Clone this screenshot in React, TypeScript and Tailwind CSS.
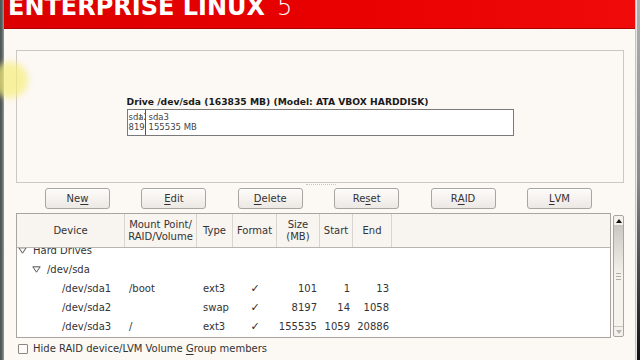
import React from 'react';

interface Row {
  level: number;
  expander?: boolean;
  device: string;
  mount?: string;
  type?: string;
  format?: boolean;
  size?: string;
  start?: string;
  end?: string;
}

const rows: Row[] = [
  { level: 0, expander: true, device: 'Hard Drives' },
  { level: 1, expander: true, device: '/dev/sda' },
  { level: 2, device: '/dev/sda1', mount: '/boot', type: 'ext3', format: true, size: '101', start: '1', end: '13' },
  { level: 2, device: '/dev/sda2', type: 'swap', format: true, size: '8197', start: '14', end: '1058' },
  { level: 2, device: '/dev/sda3', mount: '/', type: 'ext3', format: true, size: '155535', start: '1059', end: '20886' },
];

const buttons: [string, string, string][] = [
  ['Ne', 'w', ''],
  ['', 'E', 'dit'],
  ['', 'D', 'elete'],
  ['Re', 's', 'et'],
  ['R', 'A', 'ID'],
  ['', 'L', 'VM'],
];

const cols = 'grid grid-cols-[108px_72px_36px_44px_43px_33px_39px_1fr]';

const Expander = () => (
  <svg width="9" height="7" viewBox="0 0 9 7" className="shrink-0">
    <path d="M0.8 0.8 L8.2 0.8 L4.5 6.2 Z" fill="#fbf9f7" stroke="#555" strokeWidth="1" strokeLinejoin="round" />
  </svg>
);

export default function App() {
  return (
    <div className="relative w-[640px] h-[360px] overflow-hidden flex bg-[#fcf8f4] font-['DejaVu_Sans','Liberation_Sans',sans-serif] text-[#2e2e2e]">
      {/* left window edge */}
      <div className="w-[4px] h-full bg-gradient-to-r from-[#4a5252] via-[#5c6464] to-[#9aa0a0]"></div>

      <div className="w-[631px] flex flex-col">
        {/* Banner */}
        <div className="h-[29px] shrink-0 bg-gradient-to-r from-[#dc0000] via-[#e80000] to-[#f00a0a] border-b border-[#b00000] pl-[4px] overflow-hidden">
          <div className="mt-[-5px] leading-none text-white text-[24px] whitespace-nowrap">
            <span className="font-bold">ENTERPRISE LINUX</span>
            <span className="font-extralight ml-[12px]">5</span>
          </div>
        </div>

        {/* Drive panel */}
        <div className="ml-[12px] mt-[21px] w-[608px] h-[133px] shrink-0 border border-[#cbc7c3] flex items-center justify-center">
          <div className="w-[387px] mt-[-1px]">
            <div className="text-[9.2px] font-bold leading-[11px] text-[#1a1a1a] whitespace-nowrap">
              Drive /dev/sda (163835 MB) (Model: ATA VBOX HARDDISK)
            </div>
            <div className="mt-[2px] h-[27px] bg-white border border-[#7a7a7a] flex">
              <div className="w-[18px] h-full border-r border-[#555] overflow-hidden relative">
                <div className="pl-[1px] pt-[2px] text-[8.5px] leading-[10px] text-[#444] whitespace-nowrap">
                  <div>sda2</div>
                  <div>8197</div>
                </div>
                <div className="absolute left-[12px] top-[4px] h-[5px] border-l border-dotted border-[#777]"></div>
              </div>
              <div className="pl-[3px] pt-[2px] text-[8.5px] leading-[10px] text-[#444] whitespace-nowrap">
                <div>sda3</div>
                <div>155535 MB</div>
              </div>
            </div>
          </div>
        </div>

        {/* pane handle */}
        <div className="relative h-0">
          <div className="absolute left-[302px] top-[1px] w-[30px] border-t border-dotted border-[#c8c4c0]"></div>
        </div>

        {/* Buttons */}
        <div className="ml-[41px] mt-[5px] flex gap-[31.4px] shrink-0">
          {buttons.map(([a, u, b], i) => (
            <div
              key={i}
              className="w-[65px] h-[21px] rounded-[3px] border border-[#a9a5a1] bg-gradient-to-b from-[#fefcfa] to-[#ece8e4] flex items-center justify-center text-[10px] text-[#333] shadow-[inset_0_1px_0_#ffffff]"
            >
              {a}
              <span className="underline underline-offset-[2px]">{u}</span>
              {b}
            </div>
          ))}
        </div>

        {/* Table + scrollbar */}
        <div className="ml-[12px] mt-[4px] flex gap-[2px] shrink-0">
          <div className="w-[595px] h-[125px] border border-[#a8a4a0] flex flex-col bg-white">
            <div className={`${cols} h-[34px] shrink-0 bg-[#f8f4f0] border-b border-[#b8b4b0] text-[10px] leading-[12px] text-[#333]`}>
              <div className="border-r border-[#d8d4d0] flex items-center justify-center">Device</div>
              <div className="border-r border-[#d8d4d0] flex items-center justify-center text-center">
                Mount Point/
                <br />
                RAID/Volume
              </div>
              <div className="border-r border-[#d8d4d0] flex items-center justify-center">Type</div>
              <div className="border-r border-[#d8d4d0] flex items-center justify-center">Format</div>
              <div className="border-r border-[#d8d4d0] flex items-center justify-center text-center">
                Size
                <br />
                (MB)
              </div>
              <div className="border-r border-[#d8d4d0] flex items-center justify-center">Start</div>
              <div className="border-r border-[#d8d4d0] flex items-center justify-center">End</div>
              <div></div>
            </div>
            <div className="flex-1 overflow-hidden">
              <div className="mt-[-7px] text-[10px] text-[#333]">
                {rows.map((r, i) => (
                  <div key={i} className={`${cols} h-[19px] items-center whitespace-nowrap`}>
                    <div
                      className={`flex items-center gap-[6px] ${
                        r.level === 0 ? 'pl-[1px]' : r.level === 1 ? 'pl-[15px]' : 'pl-[45px]'
                      }`}
                    >
                      {r.expander && <Expander />}
                      <span>{r.device}</span>
                    </div>
                    <div className="pl-[4px]">{r.mount}</div>
                    <div className="pl-[6px]">{r.type}</div>
                    <div className="text-center text-[11px] leading-[12px] text-[#2a2a2a]">{r.format ? '✓' : ''}</div>
                    <div className="text-right pr-[3px]">{r.size}</div>
                    <div className="text-right pr-[3px]">{r.start}</div>
                    <div className="text-right pr-[3px]">{r.end}</div>
                    <div></div>
                  </div>
                ))}
              </div>
            </div>
          </div>

          {/* Scrollbar */}
          <div className="w-[11px] h-[122px] mt-[2px] rounded-[2px] border border-[#a8a4a0] bg-[#f4f0ec] flex flex-col">
            <div className="h-[10px] flex items-center justify-center border-b border-[#c8c4c0]">
              <svg width="6" height="4" viewBox="0 0 6 4">
                <path d="M0 4 L3 0 L6 4 Z" fill="#111" />
              </svg>
            </div>
            <div className="flex-1 bg-gradient-to-b from-[#cbc7c3] via-[#f6f2ee] to-[#f6f2ee] flex items-center justify-center">
              <div className="flex flex-col gap-[2px]">
                <div className="w-[5px] border-t border-[#b0aca8]"></div>
                <div className="w-[5px] border-t border-[#b0aca8]"></div>
                <div className="w-[5px] border-t border-[#b0aca8]"></div>
              </div>
            </div>
            <div className="h-[10px] flex items-center justify-center border-t border-[#c8c4c0]">
              <svg width="6" height="4" viewBox="0 0 6 4">
                <path d="M0 0 L3 4 L6 0 Z" fill="#b8b4b0" />
              </svg>
            </div>
          </div>
        </div>

        {/* Checkbox row */}
        <div className="ml-[14px] mt-[5px] h-[12px] flex items-center gap-[5px] text-[10px] leading-[12px] text-[#333]">
          <div className="w-[10px] h-[10px] border border-[#8a8682] bg-[#fdfbf9] rounded-[1px]"></div>
          <span className="whitespace-nowrap">
            Hide RAID device/LVM Volume <span className="underline underline-offset-[2px]">G</span>roup members
          </span>
        </div>
      </div>

      {/* right window edge */}
      <div className="w-[5px] h-full flex">
        <div className="w-[1px] h-full bg-[#c4c4c4]"></div>
        <div className="w-[1px] h-full bg-[#e8e8e8]"></div>
        <div className="flex-1 h-full bg-gradient-to-b from-[#b0b0b0] via-[#8a8a8a] to-[#111111]"></div>
      </div>

      {/* cursor highlight */}
      <div className="absolute left-[-8px] top-[62px] w-[36px] h-[36px] rounded-full bg-[#f5ee7a]/70 blur-[3px]"></div>
    </div>
  );
}
